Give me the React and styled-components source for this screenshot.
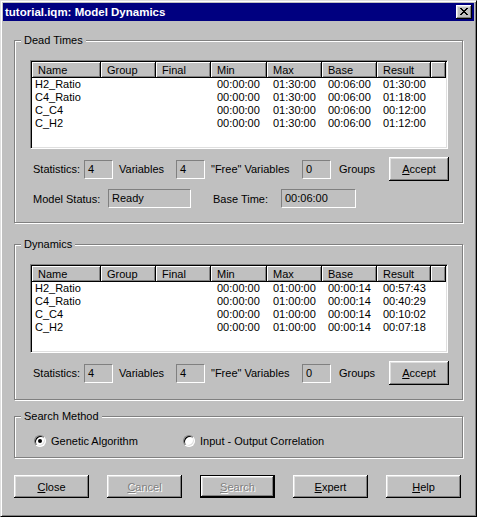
import React from 'react';
import styled, { createGlobalStyle, css } from 'styled-components';

const GlobalStyle = createGlobalStyle`
  html, body {
    margin: 0;
    padding: 0;
    background: #c0c0c0;
  }
  body {
    font-family: "Liberation Sans", Arial, sans-serif;
    font-size: 11px;
    color: #000;
  }
`;

const COLS = '69px 55px 55px 56px 55px 55px 54px 1fr';

const Window = styled.div`
  box-sizing: border-box;
  width: 477px;
  height: 517px;
  background: #c0c0c0;
  border: 1px solid;
  border-color: #dfdfdf #000 #000 #dfdfdf;
  box-shadow: inset 1px 1px #fff, inset -1px -1px #808080;
  padding: 2px;
  display: flex;
  flex-direction: column;
`;

const TitleBar = styled.div`
  height: 18px;
  flex: none;
  background: #000080;
  display: flex;
  align-items: center;
  justify-content: space-between;
  padding: 0 2px;
`;

const TitleText = styled.span`
  color: #fff;
  font-weight: bold;
  font-size: 11.5px;
  line-height: 18px;
`;

const TitleClose = styled.div`
  box-sizing: border-box;
  width: 16px;
  height: 14px;
  background: #c0c0c0;
  box-shadow: inset -1px -1px #000, inset 1px 1px #fff, inset -2px -2px #808080, inset 2px 2px #dfdfdf;
  display: flex;
  align-items: center;
  justify-content: center;
  padding: 0 1px 1px 0;
`;

const Body = styled.div`
  display: flex;
  flex-direction: column;
  padding-left: 11px;
`;

const GroupBox = styled.div`
  position: relative;
  box-sizing: border-box;
  width: 449px;
  height: ${p => p.$h}px;
  margin-top: ${p => p.$mt}px;
  border: 1px solid #808080;
  box-shadow: inset 1px 1px #fff, 1px 1px #fff;
  padding: ${p => p.$pad};
  display: flex;
  flex-direction: column;
`;

const GroupLabel = styled.span`
  position: absolute;
  top: -7px;
  left: 6px;
  padding: 0 3px;
  background: #c0c0c0;
  line-height: 13px;
`;

const ListView = styled.div`
  box-sizing: border-box;
  width: 418px;
  height: 89px;
  flex: none;
  background: #fff;
  border: 1px solid;
  border-color: #808080 #fff #fff #808080;
  box-shadow: inset 1px 1px #000, inset -1px -1px #dfdfdf;
  padding: 1px;
  overflow: hidden;
`;

const HeaderRow = styled.div`
  display: grid;
  grid-template-columns: ${COLS};
  height: 16px;
`;

const HeaderCell = styled.div`
  box-sizing: border-box;
  background: #c0c0c0;
  box-shadow: inset -1px -1px #000, inset 1px 1px #fff, inset -2px -2px #808080;
  padding-left: 6px;
  line-height: 16px;
  white-space: nowrap;
  overflow: hidden;
`;

const DataRow = styled.div`
  display: grid;
  grid-template-columns: ${COLS};
  height: 13px;
  line-height: 13px;
`;

const Cell = styled.div`
  padding-left: ${p => (p.$first ? 3 : 6)}px;
  white-space: nowrap;
`;

const FieldRow = styled.div`
  display: flex;
  align-items: center;
  height: ${p => p.$h}px;
  margin-top: 8px;
  padding-left: 3px;
  flex: none;
`;

const Label = styled.span`
  box-sizing: border-box;
  flex: none;
  width: ${p => p.$w}px;
  padding-left: ${p => p.$pl || 0}px;
  white-space: nowrap;
`;

const Field = styled.div`
  box-sizing: border-box;
  flex: none;
  width: ${p => p.$w}px;
  height: 19px;
  border: 1px solid;
  border-color: #808080 #fff #fff #808080;
  padding-left: 3px;
  line-height: 17px;
  white-space: nowrap;
`;

const Button = styled.button`
  box-sizing: border-box;
  flex: none;
  width: ${p => p.$w || 75}px;
  height: ${p => p.$h || 23}px;
  background: #c0c0c0;
  border: none;
  padding: 0;
  font: inherit;
  color: #000;
  box-shadow: inset -1px -1px #000, inset 1px 1px #fff, inset -2px -2px #808080, inset 2px 2px #dfdfdf;
  ${p => p.$default && css`
    border: 1px solid #000;
  `}
  &:disabled {
    color: #808080;
    text-shadow: 1px 1px #fff;
  }
`;

const ButtonRow = styled.div`
  display: flex;
  gap: 18px;
  margin-top: 17px;
`;

const RadioRow = styled.div`
  display: flex;
  align-items: center;
  height: 13px;
`;

const RadioItem = styled.label`
  display: flex;
  align-items: center;
  gap: 5px;
  width: ${p => (p.$w ? `${p.$w}px` : 'auto')};
  flex: none;
`;

const RadioDot = styled.span`
  position: relative;
  box-sizing: border-box;
  width: 12px;
  height: 12px;
  border-radius: 50%;
  border: 1px solid;
  border-color: #808080 #fff #fff #808080;
  background: #fff;
  box-shadow: inset 1px 1px #000, inset -1px -1px #dfdfdf;
  ${p => p.$checked && css`
    &::after {
      content: '';
      position: absolute;
      left: 3px;
      top: 3px;
      width: 4px;
      height: 4px;
      border-radius: 50%;
      background: #000;
    }
  `}
`;

const CloseGlyph = () => (
  <svg width="8" height="7" viewBox="0 0 8 7" shapeRendering="crispEdges">
    <path
      fill="#000"
      d="M0 0h2v1H0zM6 0h2v1H6zM1 1h2v1H1zM5 1h2v1H5zM2 2h4v1H2zM3 3h2v1H3zM2 4h4v1H2zM1 5h2v1H1zM5 5h2v1H5zM0 6h2v1H0zM6 6h2v1H6z"
    />
  </svg>
);

const HEADERS = ['Name', 'Group', 'Final', 'Min', 'Max', 'Base', 'Result', ''];

const deadRows = [
  ['H2_Ratio', '00:00:00', '01:30:00', '00:06:00', '01:30:00'],
  ['C4_Ratio', '00:00:00', '01:30:00', '00:06:00', '01:18:00'],
  ['C_C4', '00:00:00', '01:30:00', '00:06:00', '00:12:00'],
  ['C_H2', '00:00:00', '01:30:00', '00:06:00', '01:12:00'],
];

const dynRows = [
  ['H2_Ratio', '00:00:00', '01:00:00', '00:00:14', '00:57:43'],
  ['C4_Ratio', '00:00:00', '01:00:00', '00:00:14', '00:40:29'],
  ['C_C4', '00:00:00', '01:00:00', '00:00:14', '00:10:02'],
  ['C_H2', '00:00:00', '01:00:00', '00:00:14', '00:07:18'],
];

const Table = ({ rows }) => (
  <ListView>
    <HeaderRow>
      {HEADERS.map((h, i) => (
        <HeaderCell key={i}>{h}</HeaderCell>
      ))}
    </HeaderRow>
    {rows.map(r => (
      <DataRow key={r[0]}>
        <Cell $first>{r[0]}</Cell>
        <Cell />
        <Cell />
        <Cell>{r[1]}</Cell>
        <Cell>{r[2]}</Cell>
        <Cell>{r[3]}</Cell>
        <Cell>{r[4]}</Cell>
        <Cell />
      </DataRow>
    ))}
  </ListView>
);

const StatsRow = () => (
  <FieldRow $h={24}>
    <Label $w={51}>Statistics:</Label>
    <Field $w={29}>4</Field>
    <Label $w={63} $pl={6}>Variables</Label>
    <Field $w={29}>4</Field>
    <Label $w={97} $pl={6}>"Free" Variables</Label>
    <Field $w={29}>0</Field>
    <Label $w={58} $pl={8}>Groups</Label>
    <Button $w={60} $h={24}><u>A</u>ccept</Button>
  </FieldRow>
);

export default function App() {
  return (
    <>
      <GlobalStyle />
      <Window>
        <TitleBar>
          <TitleText>tutorial.iqm: Model Dynamics</TitleText>
          <TitleClose>
            <CloseGlyph />
          </TitleClose>
        </TitleBar>
        <Body>
          <GroupBox $h={183} $mt={19} $pad="19px 14px 14px 15px">
            <GroupLabel>Dead Times</GroupLabel>
            <Table rows={deadRows} />
            <StatsRow />
            <FieldRow $h={19}>
              <Label $w={75}>Model Status:</Label>
              <Field $w={83}>Ready</Field>
              <Label $w={90} $pl={22}>Base Time:</Label>
              <Field $w={75}>00:06:00</Field>
            </FieldRow>
          </GroupBox>

          <GroupBox $h={156} $mt={21} $pad="19px 14px 14px 15px">
            <GroupLabel>Dynamics</GroupLabel>
            <Table rows={dynRows} />
            <StatsRow />
          </GroupBox>

          <GroupBox $h={42} $mt={16} $pad="17px 14px 10px 19px">
            <GroupLabel>Search Method</GroupLabel>
            <RadioRow>
              <RadioItem $w={149}>
                <RadioDot $checked />
                Genetic Algorithm
              </RadioItem>
              <RadioItem>
                <RadioDot />
                Input - Output Correlation
              </RadioItem>
            </RadioRow>
          </GroupBox>

          <ButtonRow>
            <Button><u>C</u>lose</Button>
            <Button disabled><u>C</u>ancel</Button>
            <Button disabled $default><u>S</u>earch</Button>
            <Button><u>E</u>xpert</Button>
            <Button><u>H</u>elp</Button>
          </ButtonRow>
        </Body>
      </Window>
    </>
  );
}
